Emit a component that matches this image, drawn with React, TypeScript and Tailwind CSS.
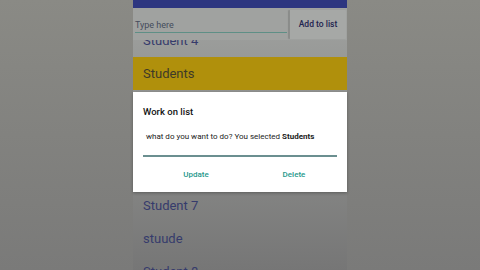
const students = ["Student 4", "Students", "Student 5", "Student 6", "Student 6", "Student 7", "stuude", "Student 8"];

export default function App() {
  const selected = "Students";

  return (
    <div
      className="flex h-[270px] w-[480px] overflow-hidden bg-[#7e7e7b]"
      style={{ fontFamily: "Roboto, 'Noto Sans', sans-serif" }}
    >
      <div className="w-[133px] shrink-0 bg-gradient-to-b from-[#8a8a85] to-[#7a7a79]" />

      <div className="relative flex w-[214px] shrink-0 flex-col bg-gradient-to-b from-[#a1a3a1] via-[#8c8d8b] to-[#767676]">
        <div className="h-[8px] shrink-0 bg-[#2d3680]" />

        {/* header: input + button */}
        <div className="relative z-10 flex h-[32px] shrink-0 items-stretch bg-[#a0a2a0]">
          <div className="flex flex-1 flex-col justify-end pb-[7px] pl-[2px] pr-[2px]">
            <span className="text-[9px] leading-[11px] text-[#454c5c]">Type here</span>
            <div className="mt-[1px] h-[1.5px] w-full bg-[#5e8f86]" />
          </div>
          <button
            type="button"
            className="mt-[2px] mb-[1px] mr-[1px] w-[57px] rounded-[1px] border-l border-[#8b8d8b] bg-[#a6a8a6] text-[8.5px] font-medium text-[#1f2450] shadow-[-1px_0_1px_rgba(0,0,0,0.15)]"
          >
            Add to list
          </button>
        </div>

        {/* list */}
        <div className="flex-1 overflow-hidden">
          <div className="-mt-[16px] flex flex-col">
            {students.map((s, i) => (
              <div
                key={i}
                className={`flex h-[33px] shrink-0 items-center pl-[10px] text-[13px] ${
                  s === selected ? "bg-[#b0900c] text-[#3e3a28]" : "text-[#363b6c]"
                }`}
              >
                {s}
              </div>
            ))}
          </div>
        </div>

        {/* dialog */}
        <div className="absolute left-0 top-[92px] z-20 flex h-[100px] w-[214px] flex-col bg-white shadow-[0_1px_3px_rgba(0,0,0,0.3)]">
          <p className="pl-[10px] pt-[14px] text-[9.5px] font-medium leading-[12px] text-[#141414]">
            Work on list
          </p>
          <p className="pl-[13px] pt-[14px] text-[8px] leading-[10px] text-[#222]">
            what do you want to do? You selected <span className="font-bold">{selected}</span>
          </p>
          <div className="ml-[10px] mr-[10px] mt-[13px] h-[2px] bg-[#6b8f90]" />
          <div className="grid grid-cols-2 pl-[14px] pr-[4px] pt-[12px] text-[8px] font-medium text-[#26988c]">
            <span className="text-center">Update</span>
            <span className="text-center">Delete</span>
          </div>
        </div>
      </div>

      <div className="flex-1 bg-gradient-to-b from-[#8a8a85] to-[#7a7a79]" />
    </div>
  );
}
